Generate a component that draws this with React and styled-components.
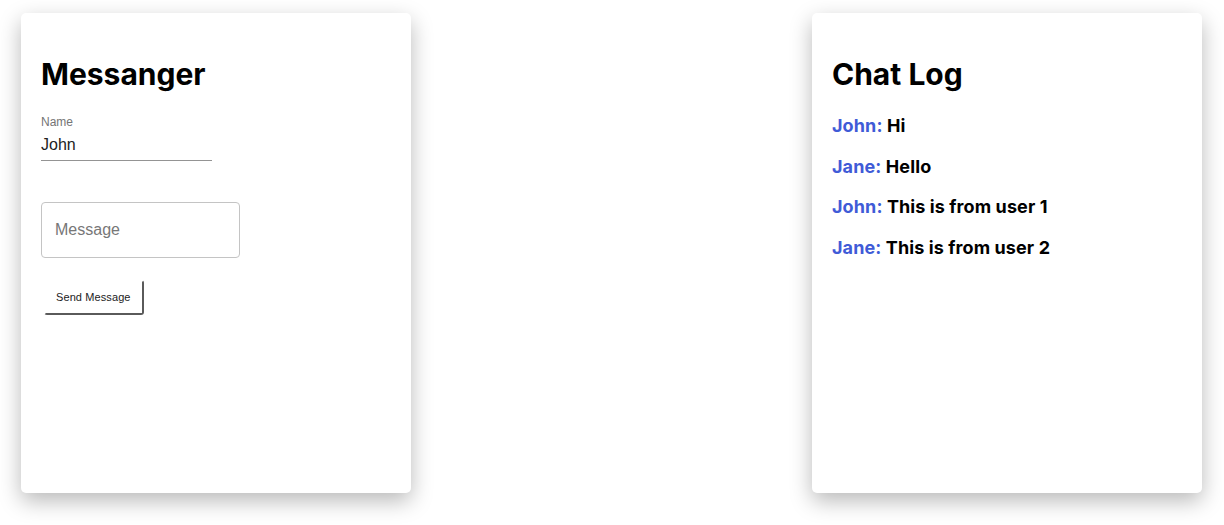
import React from "react"
import styled, { createGlobalStyle } from "styled-components"

const GlobalStyle = createGlobalStyle`
  body {
    margin: 0;
    background: #fff;
    font-family: Inter, "Liberation Sans", sans-serif;
  }
`

const Page = styled.div`
  display: flex;
  justify-content: space-between;
  align-items: flex-start;
  padding: 13px 22px 32px 21px;
`

const Card = styled.div`
  width: 390px;
  height: 480px;
  box-sizing: border-box;
  padding: 43px 20px 20px;
  background: #fff;
  border-radius: 5px;
  box-shadow: 0 8px 22px rgba(0, 0, 0, 0.28);
`

const Title = styled.h1`
  margin: 0;
  font-size: 30px;
  line-height: 36px;
  font-weight: 700;
  color: #000;
`

const Field = styled.div`
  display: flex;
  flex-direction: column;
  width: 171px;
  margin-top: 23px;
  border-bottom: 1px solid #949494;
  font-family: "Liberation Sans", Arial, sans-serif;
`

const Label = styled.label`
  font-size: 12px;
  line-height: 14px;
  color: #757575;
`

const TextInput = styled.input`
  border: none;
  outline: none;
  padding: 7px 0 6px;
  font-family: inherit;
  font-size: 16px;
  color: #222;
  background: transparent;
`

const MessageBox = styled.input`
  display: block;
  box-sizing: border-box;
  width: 199px;
  height: 56px;
  margin-top: 41px;
  padding: 0 13px;
  border: 1px solid #c4c4c4;
  border-radius: 4px;
  outline: none;
  font-family: "Liberation Sans", Arial, sans-serif;
  font-size: 16px;
  color: #222;

  &::placeholder {
    color: #777;
  }
`

const SendButton = styled.button`
  display: block;
  margin: 22px 0 0 3px;
  padding: 9px 11px 9px 10px;
  background: #fff;
  border: 2px solid;
  border-color: transparent #5a5a5a #5a5a5a transparent;
  border-radius: 3px;
  font-family: "Liberation Sans", Arial, sans-serif;
  font-size: 11px;
  line-height: 13px;
  letter-spacing: 0.1px;
  color: #222;
`

const LogList = styled.div`
  display: flex;
  flex-direction: column;
  gap: 18.7px;
  margin-top: 23px;
`

const LogLine = styled.p`
  margin: 0;
  font-size: 18px;
  line-height: 22px;
  font-weight: 700;
  letter-spacing: 0.1px;
  color: #000;
`

const Sender = styled.span`
  color: #3f5bd7;
`

const messages = [
  { from: "John", text: "Hi" },
  { from: "Jane", text: "Hello" },
  { from: "John", text: "This is from user 1" },
  { from: "Jane", text: "This is from user 2" },
]

const App = () => (
  <>
    <GlobalStyle />
    <Page>
      <Card>
        <Title>Messanger</Title>
        <Field>
          <Label>Name</Label>
          <TextInput defaultValue="John" />
        </Field>
        <MessageBox placeholder="Message" />
        <SendButton>Send Message</SendButton>
      </Card>

      <Card>
        <Title>Chat Log</Title>
        <LogList>
          {messages.map((m, i) => (
            <LogLine key={i}>
              <Sender>{m.from}:</Sender> {m.text}
            </LogLine>
          ))}
        </LogList>
      </Card>
    </Page>
  </>
)

export default App
